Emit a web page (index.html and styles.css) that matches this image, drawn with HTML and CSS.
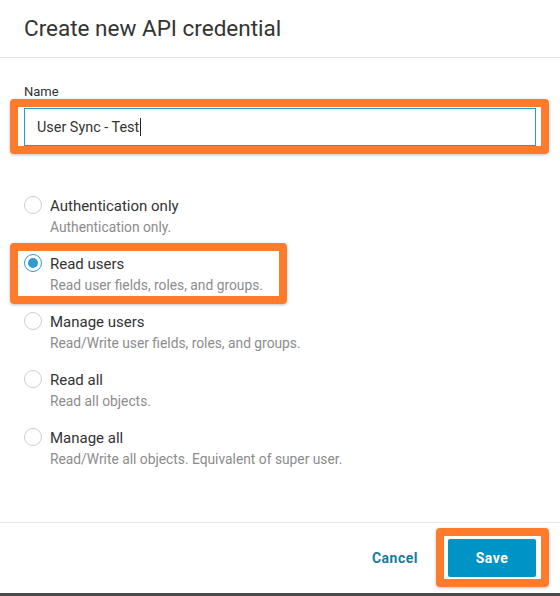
FILE: index.html
```html
<!DOCTYPE html>
<html lang="en">
<head>
<meta charset="utf-8">
<title>Create new API credential</title>
<link rel="stylesheet" href="styles.css">
</head>
<body>
<div class="modal">
  <header class="modal-header">
    <h1 class="modal-title">Create new API credential</h1>
  </header>
  <main class="modal-body">
    <label class="field-label">Name</label>
    <div class="text-input">User Sync - Test<span class="caret"></span></div>
    <ul class="options">
      <li class="option">
        <span class="radio"></span>
        <div class="option-text">
          <div class="option-title">Authentication only</div>
          <div class="option-desc">Authentication only.</div>
        </div>
      </li>
      <li class="option">
        <span class="radio checked"></span>
        <div class="option-text">
          <div class="option-title">Read users</div>
          <div class="option-desc">Read user fields, roles, and groups.</div>
        </div>
      </li>
      <li class="option">
        <span class="radio"></span>
        <div class="option-text">
          <div class="option-title">Manage users</div>
          <div class="option-desc">Read/Write user fields, roles, and groups.</div>
        </div>
      </li>
      <li class="option">
        <span class="radio"></span>
        <div class="option-text">
          <div class="option-title">Read all</div>
          <div class="option-desc">Read all objects.</div>
        </div>
      </li>
      <li class="option">
        <span class="radio"></span>
        <div class="option-text">
          <div class="option-title">Manage all</div>
          <div class="option-desc">Read/Write all objects. Equivalent of super user.</div>
        </div>
      </li>
    </ul>
  </main>
  <footer class="modal-footer">
    <button class="btn btn-cancel">Cancel</button>
    <button class="btn btn-save">Save</button>
  </footer>
  <div class="backdrop-strip"></div>

  <div class="highlight hl-name"></div>
  <div class="highlight hl-option"></div>
  <div class="highlight hl-save"></div>
</div>
</body>
</html>
```

FILE: styles.css
```css
* { box-sizing: border-box; }

html, body {
  margin: 0;
  padding: 0;
  background: #ffffff;
}

body {
  font-family: Roboto, "Liberation Sans", Arial, sans-serif;
  color: #333333;
}

.modal {
  position: relative;
  width: 560px;
  height: 596px;
  display: flex;
  flex-direction: column;
  background: #ffffff;
}

.modal-header {
  height: 58px;
  padding: 14px 24px 0;
  border-bottom: 1px solid #e3e3e3;
}

.modal-title {
  margin: 0;
  font-size: 22.5px;
  line-height: 28px;
  font-weight: 400;
  color: #333333;
}

.modal-body {
  flex: 1;
  padding: 26px 24px 0;
  display: flex;
  flex-direction: column;
}

.field-label {
  display: block;
  font-size: 13px;
  line-height: 16px;
  color: #333333;
}

.text-input {
  margin-top: 8px;
  height: 38px;
  border: 1px solid #1d9fd3;
  padding: 0 12px;
  display: flex;
  align-items: center;
  font-size: 14.4px;
  color: #333333;
}

.caret {
  display: inline-block;
  width: 1px;
  height: 18px;
  background: #222222;
  margin-left: 1px;
}

.options {
  list-style: none;
  margin: 50px 0 0;
  padding: 0;
  display: flex;
  flex-direction: column;
  gap: 16px;
}

.option {
  display: flex;
  align-items: flex-start;
  gap: 8px;
  height: 42px;
}

.radio {
  flex: none;
  width: 18px;
  height: 18px;
  margin-top: 0;
  border: 1px solid #cfcfcf;
  border-radius: 50%;
  background: #ffffff;
  display: flex;
  align-items: center;
  justify-content: center;
}

.radio.checked {
  border-color: #2c9dd6;
}

.radio.checked::after {
  content: "";
  width: 10px;
  height: 10px;
  border-radius: 50%;
  background: #3499d3;
}

.option-title {
  font-size: 15px;
  line-height: 20px;
  color: #333333;
}

.option-desc {
  margin-top: 1px;
  font-size: 13.8px;
  line-height: 20px;
  color: #8c8c8c;
}

.modal-footer {
  height: 71px;
  border-top: 1px solid #e6e6e6;
  padding: 0 24px;
  display: flex;
  align-items: center;
  justify-content: flex-end;
}

.btn {
  font-family: Roboto, "Liberation Sans", Arial, sans-serif;
  font-size: 14px;
  font-weight: 700;
  letter-spacing: 0.5px;
  border: 0;
  height: 38px;
  cursor: pointer;
}

.btn-cancel {
  background: transparent;
  color: #1a79a4;
  padding: 0 16px;
  margin-right: 14px;
}

.btn-save {
  width: 88px;
  background: #0093c5;
  color: #ffffff;
  border-radius: 2px;
}

.backdrop-strip {
  height: 3px;
  background: #4a4a4a;
}

.highlight {
  position: absolute;
  border: 8px solid #fe7b2b;
  border-radius: 4px;
  box-shadow: 0 1px 3px rgba(0, 0, 0, 0.25);
  pointer-events: none;
}

.hl-name {
  left: 10px;
  top: 99px;
  width: 539px;
  height: 55px;
}

.hl-option {
  left: 10px;
  top: 243px;
  width: 277px;
  height: 61px;
}

.hl-save {
  left: 436px;
  top: 528px;
  width: 113px;
  height: 59px;
}
```
